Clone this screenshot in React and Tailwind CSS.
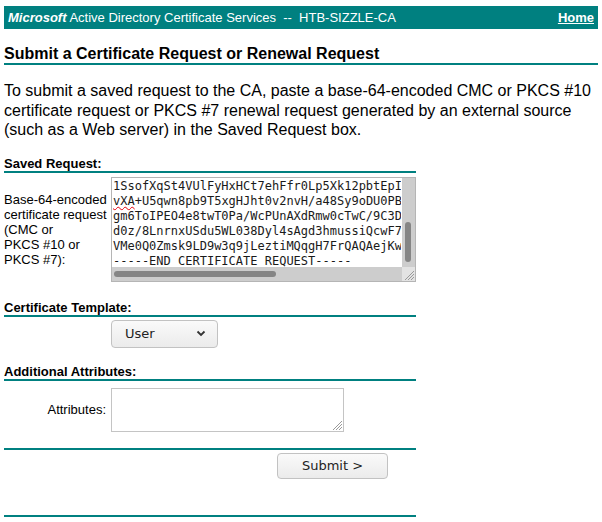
import React from "react";

const requestLines = [
  "1SsofXqSt4VUlFyHxHCt7ehFfr0Lp5Xk12pbtEpI",
  "vXA+U5qwn8pb9T5xgHJht0v2nvH/a48Sy9oDU0PB",
  "gm6ToIPEO4e8twT0Pa/WcPUnAXdRmw0cTwC/9C3D",
  "d0z/8LnrnxUSdu5WL038Dyl4sAgd3hmussiQcwF7",
  "VMe0Q0Zmsk9LD9w3q9jLeztiMQqgH7FrQAQAejKw",
  "-----END CERTIFICATE REQUEST-----",
];

// little striped grip in the corner of a textarea
const Grip = ({ className }) => (
  <svg width="13" height="13" viewBox="0 0 13 13" className={className}>
    <path d="M12 3 L3 12 M12 6 L6 12 M12 9 L9 12" stroke="#9a9a9a" strokeWidth="1" />
  </svg>
);

const SectionTitle = ({ children, className = "" }) => (
  <div className={`w-[412px] border-b-2 border-[#008080] text-[13px] leading-[15px] font-bold text-black ${className}`}>
    {children}
  </div>
);

export default function App() {
  return (
    <div
      className="min-h-[522px] bg-white px-1 pt-[6px] text-black"
      style={{ fontFamily: '"Liberation Sans", Arial, sans-serif' }}
    >
      {/* Top bar */}
      <div className="flex h-[23px] items-center justify-between bg-[#008080] px-1 text-[13px] text-white">
        <div className="whitespace-pre">
          <span className="font-bold italic">Microsoft</span> Active Directory Certificate Services  --  HTB-SIZZLE-CA
        </div>
        <a href="#" className="font-bold underline">Home</a>
      </div>

      {/* Heading */}
      <h1 className="mt-[14px] border-b-2 border-[#008080] pt-[2px] text-[16px] leading-[18px] font-bold">
        Submit a Certificate Request or Renewal Request
      </h1>

      <p className="mt-[16px] text-[16px] leading-[19.5px]">
        To submit a saved request to the CA, paste a base-64-encoded CMC or PKCS #10
        certificate request or PKCS #7 renewal request generated by an external source
        (such as a Web server) in the Saved Request box.
      </p>

      {/* Saved request */}
      <SectionTitle className="mt-[16px]">Saved Request:</SectionTitle>
      <div className="mt-[4px] flex w-[412px] items-center">
        <div className="w-[103px] text-[13px] leading-[15px]">
          Base-64-encoded<br />certificate request<br />(CMC or<br />PKCS #10 or<br />PKCS #7):
        </div>
        <div className="ml-[4px] relative h-[105px] w-[305px] overflow-hidden border border-[#b5b5b5] bg-white">
          <div
            className="w-[289px] overflow-hidden pl-[1px] pt-[1px] text-[12px] leading-[15px] text-[#1a1a1a] whitespace-pre"
            style={{ fontFamily: '"DejaVu Sans Mono", monospace' }}
          >
            {requestLines.map((line, i) => (
              <div key={i}>
                {i === 1 ? (
                  <>
                    <span className="underline decoration-wavy decoration-red-600 decoration-1">vXA</span>
                    {line.slice(3)}
                  </>
                ) : (
                  line
                )}
              </div>
            ))}
          </div>
          {/* vertical scrollbar */}
          <div className="absolute right-0 top-0 h-[90px] w-[13px] bg-[#cdcdcd]">
            <div className="absolute left-[3px] top-[44px] h-[40px] w-[6px] rounded-full bg-[#858585]" />
          </div>
          {/* horizontal scrollbar */}
          <div className="absolute bottom-0 left-0 h-[14px] w-[290px] bg-[#cdcdcd]">
            <div className="absolute left-[2px] top-[4px] h-[6px] w-[162px] rounded-full bg-[#858585]" />
          </div>
          <div className="absolute bottom-0 right-0 h-[14px] w-[13px] bg-[#e3e3e3]">
            <Grip className="absolute bottom-0 right-0" />
          </div>
        </div>
      </div>

      {/* Template */}
      <SectionTitle className="mt-[18px]">Certificate Template:</SectionTitle>
      <div className="mt-[3px] pl-[107px]">
        <div
          className="flex h-[28px] w-[107px] items-center justify-between rounded-[4px] border border-[#c2c2c2] bg-gradient-to-b from-[#fafafa] to-[#ebebeb] pl-[13px] pr-[11px] text-[13px] text-[#222]"
          style={{ fontFamily: '"DejaVu Sans", sans-serif' }}
        >
          <span>User</span>
          <svg width="10" height="7" viewBox="0 0 10 7">
            <path d="M1.5 1.5 L5 5 L8.5 1.5" fill="none" stroke="#333" strokeWidth="1.8" />
          </svg>
        </div>
      </div>

      {/* Additional attributes */}
      <SectionTitle className="mt-[16px]">Additional Attributes:</SectionTitle>
      <div className="mt-[7px] flex w-[412px] items-center">
        <div className="w-[102px] text-right text-[13px] leading-[15px]">Attributes:</div>
        <div className="ml-[5px] relative h-[44px] w-[233px] border border-[#c4c4c4] bg-white">
          <Grip className="absolute bottom-0 right-0" />
        </div>
      </div>

      <div className="mt-[16px] w-[412px] border-b-2 border-[#008080]" />
      <div className="mt-[3px] w-[412px] pl-[273px]">
        <button
          className="h-[26px] w-[111px] rounded-[4px] border border-[#c2c2c2] bg-gradient-to-b from-[#fafafa] to-[#ebebeb] text-[13px] text-[#222]"
          style={{ fontFamily: '"DejaVu Sans", sans-serif' }}
        >
          Submit &gt;
        </button>
      </div>

      <div className="mt-[36px] w-[412px] border-b-2 border-[#008080]" />
    </div>
  );
}
